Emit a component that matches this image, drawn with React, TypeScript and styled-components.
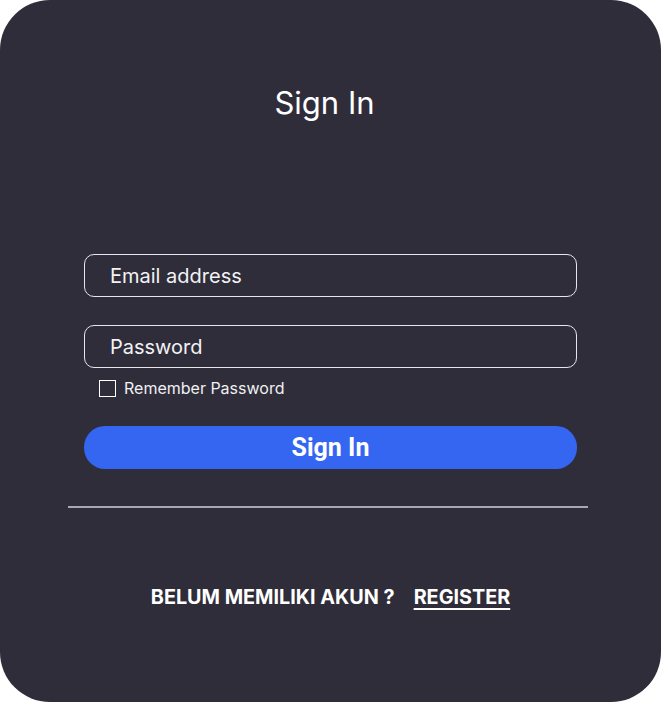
import styled, {createGlobalStyle} from "styled-components"

const GlobalStyle = createGlobalStyle`
  html, body {
    margin: 0;
    padding: 0;
    background: #ffffff;
  }
  * {
    box-sizing: border-box;
  }
`

const Card = styled.div`
  width: 661px;
  height: 702px;
  border-radius: 50px;
  background: #2f2d3a;
  display: flex;
  flex-direction: column;
  align-items: center;
  font-family: Inter, "Noto Sans", sans-serif;
  color: #ffffff;
`

const Title = styled.h1`
  margin: 84px 12px 0 0;
  font-size: 31px;
  font-weight: 400;
  line-height: 38px;
`

const Form = styled.form`
  width: 493px;
  margin-top: 132px;
  display: flex;
  flex-direction: column;
`

const Field = styled.input<{$gap?: number}>`
  height: 43px;
  width: 100%;
  margin-top: ${props => props.$gap ?? 0}px;
  padding: 0 25px;
  border: 1px solid #e6e6ea;
  border-radius: 10px;
  background: transparent;
  color: #ffffff;
  font-family: Inter, sans-serif;
  font-size: 20px;
  outline: none;
  &::placeholder {
    color: #f2f2f4;
  }
`

const CheckRow = styled.label`
  display: flex;
  align-items: center;
  gap: 8px;
  margin: 11px 0 0 15px;
  font-size: 16px;
  line-height: 19px;
  color: #f0f0f2;
`

const Box = styled.span`
  width: 17px;
  height: 17px;
  border: 1px solid #ffffff;
`

const Submit = styled.button`
  margin-top: 28px;
  height: 43px;
  border: none;
  border-radius: 21px;
  background: #3566f2;
  color: #ffffff;
  font-family: Roboto, sans-serif;
  font-weight: 700;
  font-size: 25px;
`

const Divider = styled.hr`
  width: 520px;
  margin: 37px 0 0 -6px;
  border: none;
  border-top: 2px solid #a9a8b0;
`

const Footer = styled.div`
  margin-top: 77px;
  display: flex;
  gap: 19px;
  font-weight: 700;
  font-size: 19.8px;
  line-height: 24px;
`

const Link = styled.a`
  color: #ffffff;
  text-decoration: underline;
  text-underline-offset: 4px;
  text-decoration-thickness: 2px;
`

export default function App() {
  return (
    <>
      <GlobalStyle />
      <Card>
        <Title>Sign In</Title>
        <Form onSubmit={e => e.preventDefault()}>
          <Field placeholder="Email address" />
          <Field $gap={28} type="password" placeholder="Password" />
          <CheckRow>
            <Box />
            Remember Password
          </CheckRow>
          <Submit>Sign In</Submit>
        </Form>
        <Divider />
        <Footer>
          <span>BELUM MEMILIKI AKUN ?</span>
          <Link>REGISTER</Link>
        </Footer>
      </Card>
    </>
  )
}
